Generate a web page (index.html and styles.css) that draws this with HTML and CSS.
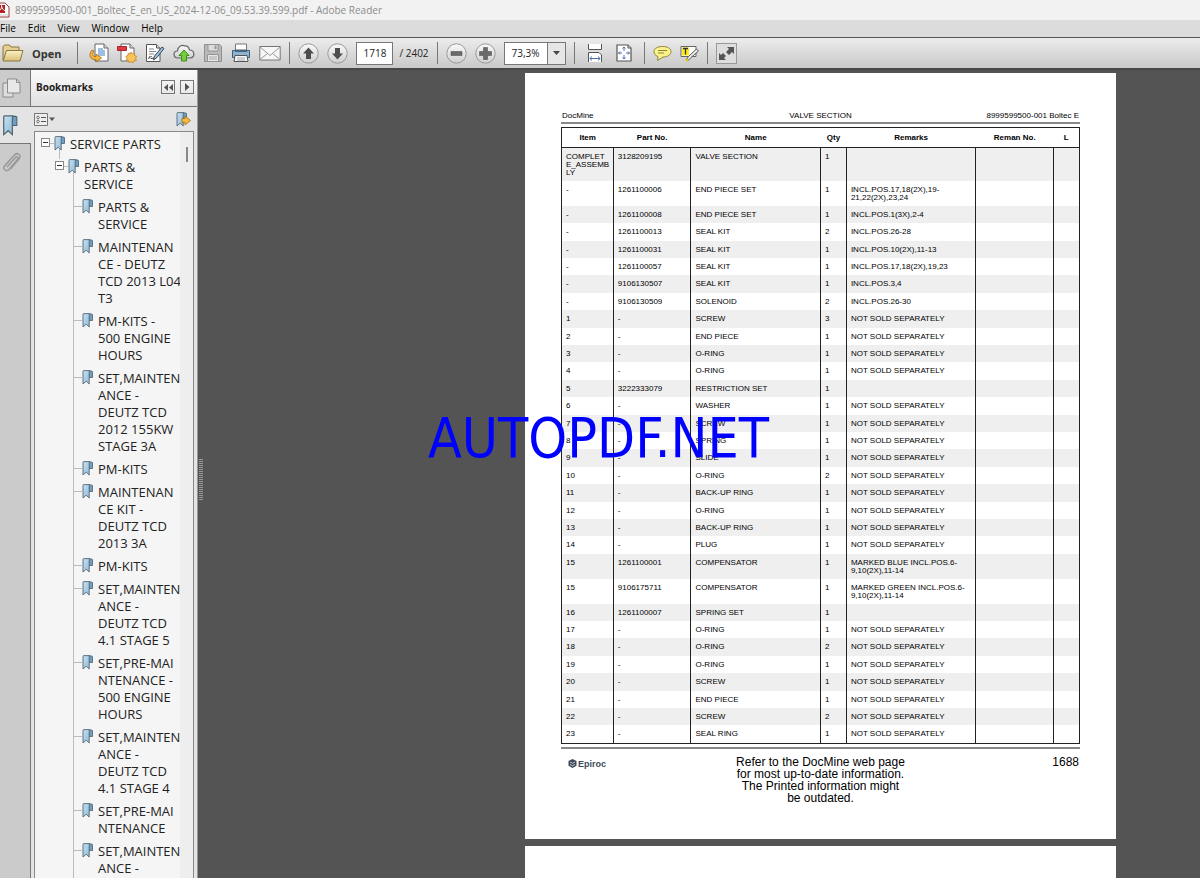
FILE: index.html
```html
<!DOCTYPE html>
<html lang="en">
<head>
<meta charset="utf-8">
<title>8999599500-001_Boltec_E_en_US_2024-12-06_09.53.39.599.pdf - Adobe Reader</title>
<link rel="stylesheet" href="styles.css">
</head>
<body>
<svg class="defs" width="0" height="0" aria-hidden="true">
  <defs>
    <linearGradient id="blue" x1="0" x2="1" y1="0" y2="1"><stop offset="0" stop-color="#c4e0f2"/><stop offset="1" stop-color="#8fbad6"/></linearGradient>
    <linearGradient id="tan" x1="0" x2="0" y1="0" y2="1"><stop offset="0" stop-color="#fbf0c4"/><stop offset="1" stop-color="#d9bf78"/></linearGradient>
    <linearGradient id="disc" x1="0" x2="0" y1="0" y2="1"><stop offset="0" stop-color="#fafafa"/><stop offset="1" stop-color="#cfcfcf"/></linearGradient>
    <symbol id="bm" viewBox="0 0 11 15"><path d="M6.500 1H9.500q1 0 1 1V7.500H7z" fill="#6f9fc0" stroke="#4a5f70" stroke-width=".8"/><path d="M1.500.6H8Q7.200 1 7.200 2.500V14L4.200 11.200 1 14V1.500Q1 .6 1.500.6z" fill="url(#blue)" stroke="#566775" stroke-width=".9"/></symbol>
  </defs>
</svg>
<div class="app">
  <header class="titlebar">
    <svg width="10" height="16" viewBox="0 0 10 16"><path d="M-4 1h9l4 4v10h-13z" fill="#fff" stroke="#9b3a3a"/><path d="M-4 3h9v8h-9z" fill="#b51f24"/><path d="M-2 9C1 8 2 6 1.500 3.500c.5 3 2 5 4 5.500" fill="none" stroke="#fff"/><path d="M-2 13h10" fill="none" stroke="#c9c9c9"/></svg>
    <span>8999599500-001_Boltec_E_en_US_2024-12-06_09.53.39.599.pdf - Adobe Reader</span>
  </header>
  <nav class="menubar">
    <button>File</button><button>Edit</button><button>View</button><button>Window</button><button>Help</button>
  </nav>
  <div class="toolbar">
    <button class="open"><svg width="22" height="20" viewBox="0 0 22 20"><path d="M1 17V3.500L2.500 2h5l1.500 2h8v4" fill="#e6cf92" stroke="#8a7643"/><path d="M1 18 4.500 7.500H21L18 18z" fill="url(#tan)" stroke="#8a7643"/></svg>Open</button>
    <span class="sep"></span>
    <div class="group files">
      <button aria-label="Convert"><svg width="20" height="20" viewBox="0 0 20 20"><path d="M6 1h9l4 4v13H6z" fill="#fff" stroke="#666"/><path d="M15 1v4h4" fill="#ddd" stroke="#666"/><path d="M9 6h5M9 8h7M9 10h7M9 12h7" stroke="#3c7cc4"/><path d="M3 7C-1 12 1 17 7 16.500V19l5.500-4L7 11v2.500C4 14 2.500 12 5 8z" fill="#f4b63c" stroke="#a36a10" stroke-width=".8"/></svg></button>
      <button aria-label="Create PDF"><svg width="20" height="20" viewBox="0 0 20 20"><path d="M4 1h9l4 4v13H4z" fill="#fff" stroke="#666"/><path d="M13 1v4h4" fill="#ddd" stroke="#666"/><path d="M.5 3.500h9v4h-9z" fill="#dc3a40" stroke="#a9262b"/><path d="m14 9 1.200 2 2.200-.8.200 2.300 2.200.8-1.300 1.900.9 2.200-2.300.3-.8 2.200-2-1.200-2 1.200-.8-2.200-2.200-.4.800-2.200-1.300-1.800 2.200-.9.200-2.200 2.200.8z" fill="#f8c45a" stroke="#c5842a" stroke-width=".8"/></svg></button>
      <button aria-label="Sign"><svg width="20" height="20" viewBox="0 0 20 20"><path d="M1.500 1.500h10L15 5v13.500H1.500z" fill="#fff" stroke="#555"/><path d="M11.500 1.500V5H15" fill="#ddd" stroke="#555"/><path d="M4 6h5M4 8.500h7M4 11h5M4 13.500h3" stroke="#888"/><path d="M17 4l2 1.500-7 9-3.500 2.500 1-4z" fill="#9cc0dc" stroke="#34495c"/><path d="m3 15.500 2-1 1 1 3-.5" fill="none" stroke="#333"/></svg></button>
      <button aria-label="Upload"><svg width="22" height="20" viewBox="0 0 22 20"><path d="M5 15C-.5 15 0 8 4.500 8 5 3 9 1.500 12 3c2-.5 4 1 4.500 4 5.500 0 6 8 .5 8z" fill="url(#disc)" stroke="#666" stroke-width="1.200"/><path d="m11 7 5 5.500h-2.500V18h-5v-5.500H6z" fill="#74cd3a" stroke="#3d8e17"/></svg></button>
      <button aria-label="Save"><svg width="20" height="20" viewBox="0 0 20 20"><path d="M1.500 1.500h15l2 2v15h-17z" fill="#b9b9b9" stroke="#8e8e8e"/><path d="M5 1.500h10V8H5z" fill="#ddd" stroke="#949494"/><path d="M11.500 2.500h2V6h-2z" fill="#999"/><path d="M4.500 11.500h11v7h-11z" fill="#e6e6e6" stroke="#949494"/><path d="M6 14h8M6 16h8" stroke="#aaa"/></svg></button>
      <button aria-label="Print"><svg width="20" height="20" viewBox="0 0 20 20"><path d="M4.500 1h11v7h-11z" fill="#fff" stroke="#777"/><path d="M1.500 7.500h17v7h-17z" fill="#8db4d2" stroke="#3e5c74"/><path d="M4 6.500h12v2.500H4z" fill="#4b6478"/><path d="M4 12.500h12l1 6H3z" fill="#f7f7f7" stroke="#555"/><path d="M6 15h8M6 17h8" stroke="#aaa"/></svg></button>
      <button aria-label="Email"><svg width="22" height="20" viewBox="0 0 22 20"><path d="M.8 3.500h20.400v13.500H.8z" fill="#f7f7f7" stroke="#777"/><path d="m1 4 10 8.500L21 4M1 16.500l7.500-6M21 16.500l-7.500-6" fill="none" stroke="#999"/></svg></button>
    </div>
    <span class="sep"></span>
    <div class="group">
      <button aria-label="Previous page"><svg width="21" height="21" viewBox="0 0 21 21"><circle cx="10.500" cy="10.500" r="9.700" fill="url(#disc)" stroke="#999"/><path d="m10.500 4.500 5.500 6h-3V16H8v-5.500H5z" fill="#4d4d4d"/></svg></button>
      <button aria-label="Next page"><svg width="21" height="21" viewBox="0 0 21 21"><circle cx="10.500" cy="10.500" r="9.700" fill="url(#disc)" stroke="#999"/><path d="m10.500 16.500 5.500-6h-3V5H8v5.500H5z" fill="#4d4d4d"/></svg></button>
      <label class="pager"><input class="page-no" aria-label="Page number" value="1718"><span>/ 2402</span></label>
    </div>
    <span class="sep"></span>
    <div class="group">
      <button aria-label="Zoom out"><svg width="21" height="21" viewBox="0 0 21 21"><circle cx="10.500" cy="10.500" r="9.700" fill="url(#disc)" stroke="#999"/><path d="M5 8.500h11v4H5z" fill="#6a6a6a" stroke="#555" stroke-width=".6"/></svg></button>
      <button aria-label="Zoom in"><svg width="21" height="21" viewBox="0 0 21 21"><circle cx="10.500" cy="10.500" r="9.700" fill="url(#disc)" stroke="#999"/><path d="M8.500 4.500h4v4h4v4h-4v4h-4v-4h-4v-4h4z" fill="#6a6a6a" stroke="#555" stroke-width=".6"/></svg></button>
      <div class="zoom"><input aria-label="Zoom level" value="73,3%"><button aria-label="Zoom options"><svg width="7" height="4" viewBox="0 0 7 4"><path d="M0 0h7L3.500 4z" fill="#444"/></svg></button></div>
    </div>
    <span class="sep"></span>
    <div class="group views">
      <button aria-label="Fit width"><svg width="16" height="20" viewBox="0 0 16 20"><path d="M1.500 1v5.500h13V1" fill="#fff" stroke="#555"/><path d="M1.500 19V9.500H12l2.500 2.500v7" fill="#fff" stroke="#555"/><path d="M3 15.500h10M5 13.500l-2.200 2L5 17.500M11 13.500l2.200 2-2.200 2" fill="none" stroke="#4a6fb5"/></svg></button>
      <button aria-label="Fit page"><svg width="16" height="18" viewBox="0 0 16 18"><path d="M1 1h11l3 3v13H1z" fill="#fff" stroke="#555" stroke-width="1.200"/><path d="M12 1v3h3" fill="#ddd" stroke="#555"/><path d="M8 3v4M8 11v4M2.500 9H6M10 9h3.500M6.500 4.500 8 3l1.500 1.500M6.500 13.500 8 15l1.500-1.500M4 7.500 2.500 9 4 10.500M12 7.500 13.500 9 12 10.500" fill="none" stroke="#4a6fb5"/></svg></button>
    </div>
    <span class="sep"></span>
    <div class="group">
      <button aria-label="Comment"><svg width="19" height="18" viewBox="0 0 19 18"><path d="M9.500 2.500c5 0 8.500 2 8.500 5s-3 5.500-8 5.500L4.500 16.500 5 12.500C2.500 11.500 1 10 1 7.500c0-3 3.500-5 8.500-5z" fill="#fbf38a" stroke="#8c8340"/><path d="M5 6.500h9M5 9h6" stroke="#8c8340"/></svg></button>
      <button aria-label="Highlight text"><svg width="19" height="18" viewBox="0 0 19 18"><path d="M1 2.500h15v10H1z" fill="#fff" stroke="#666"/><path d="M2 3.500h7v8H2z" fill="#ffec1a"/><path d="M3 4.500h5M5.500 4.500v6" stroke="#333" stroke-width="1.300"/><path d="m16.500 5 2 2-8 7-3 3-1-2 2-2.500z" fill="#ececec" stroke="#555"/><path d="M6 15l2 2" stroke="#d8c800" stroke-width="2"/></svg></button>
    </div>
    <span class="sep"></span>
    <button class="full" aria-label="Full screen"><svg width="19" height="19" viewBox="0 0 19 19"><path d="M10 3h7v7l-2-2-3 3-3-3 3-3zM9 16H2V9l2 2 2-2 3 3-2 2z" fill="#555"/></svg></button>
  </div>

  <div class="body">
    <nav class="rail" aria-label="Panels">
      <button class="tab" aria-label="Page thumbnails"><svg width="19" height="21" viewBox="0 0 19 21"><path d="M1 5h10v14H1z" fill="#ddd" stroke="#8b8b8b"/><path d="M5.500 1h9L18 4.500V15H5.500z" fill="#e8e8e8" stroke="#8b8b8b"/><path d="M14.500 1v3.500H18" fill="none" stroke="#8b8b8b"/></svg></button>
      <button class="tab active" aria-label="Bookmarks"><svg width="16" height="21" viewBox="0 0 11 15"><use href="#bm"/></svg></button>
      <button class="tab clip" aria-label="Attachments"><svg width="20" height="21" viewBox="0 0 20 21"><path d="m6 15 8.500-9.500c1.500-1.500 3.500.2 2.200 1.800L8 17.500c-2.500 2.500-7 0-4.500-3.500L13 3.500C16-.5 21 3 18 7l-8.500 10" fill="none" stroke="#999" stroke-width="1.500"/></svg></button>
    </nav>
    <aside class="panel">
      <div class="panel-head"><h2>Bookmarks</h2>
        <button aria-label="Collapse panel"><svg width="9" height="7" viewBox="0 0 9 7"><path d="M4 0v7L0 3.500zM9 0v7L5 3.500z" fill="#555"/></svg></button>
        <button aria-label="Expand panel"><svg width="5" height="8" viewBox="0 0 5 8"><path d="M0 0v8l4.500-4z" fill="#555"/></svg></button>
      </div>
      <div class="panel-tools">
        <button aria-label="Options"><svg width="21" height="13" viewBox="0 0 21 13"><path d="M.5.5h13v12H.5z" fill="#eee" stroke="#777"/><path d="M7 4.500h5M7 8.500h5" stroke="#555"/><circle cx="4" cy="4.500" r="1.300" fill="none" stroke="#555" stroke-width=".8"/><circle cx="4" cy="8.500" r="1.300" fill="none" stroke="#555" stroke-width=".8"/><path d="M15 4.500h6l-3 3.500z" fill="#555"/></svg></button>
        <button aria-label="Find bookmark"><svg width="15" height="15" viewBox="0 0 15 15"><use href="#bm" width="11" height="15"/><path d="M6 6.500h3V4l5.500 4.500L9 13v-2.500H6z" fill="#f5b840" stroke="#a36a10" stroke-width=".8"/></svg></button>
      </div>
      <div class="tree-box">
        <ul class="tree">
          <li><div class="node root"><button class="toggle" aria-label="Collapse"></button><i class="dash"></i><svg class="bm"><use href="#bm"/></svg><a href="#">SERVICE PARTS</a></div>
            <ul class="second">
              <li><div class="node root"><button class="toggle" aria-label="Collapse"></button><i class="dash"></i><svg class="bm"><use href="#bm"/></svg><a href="#">PARTS &amp;<br>SERVICE</a></div>
                <ul class="third">
                  <li class="node"><i class="dash"></i><svg class="bm"><use href="#bm"/></svg><a href="#">PARTS &amp;<br>SERVICE</a></li>
                  <li class="node"><i class="dash"></i><svg class="bm"><use href="#bm"/></svg><a href="#">MAINTENAN<br>CE - DEUTZ<br>TCD 2013 L04<br>T3</a></li>
                  <li class="node"><i class="dash"></i><svg class="bm"><use href="#bm"/></svg><a href="#">PM-KITS -<br>500 ENGINE<br>HOURS</a></li>
                  <li class="node"><i class="dash"></i><svg class="bm"><use href="#bm"/></svg><a href="#">SET,MAINTEN<br>ANCE -<br>DEUTZ TCD<br>2012 155KW<br>STAGE 3A</a></li>
                  <li class="node"><i class="dash"></i><svg class="bm"><use href="#bm"/></svg><a href="#">PM-KITS</a></li>
                  <li class="node"><i class="dash"></i><svg class="bm"><use href="#bm"/></svg><a href="#">MAINTENAN<br>CE KIT -<br>DEUTZ TCD<br>2013 3A</a></li>
                  <li class="node"><i class="dash"></i><svg class="bm"><use href="#bm"/></svg><a href="#">PM-KITS</a></li>
                  <li class="node"><i class="dash"></i><svg class="bm"><use href="#bm"/></svg><a href="#">SET,MAINTEN<br>ANCE -<br>DEUTZ TCD<br>4.1 STAGE 5</a></li>
                  <li class="node"><i class="dash"></i><svg class="bm"><use href="#bm"/></svg><a href="#">SET,PRE-MAI<br>NTENANCE -<br>500 ENGINE<br>HOURS</a></li>
                  <li class="node"><i class="dash"></i><svg class="bm"><use href="#bm"/></svg><a href="#">SET,MAINTEN<br>ANCE -<br>DEUTZ TCD<br>4.1 STAGE 4</a></li>
                  <li class="node"><i class="dash"></i><svg class="bm"><use href="#bm"/></svg><a href="#">SET,PRE-MAI<br>NTENANCE</a></li>
                  <li class="node"><i class="dash"></i><svg class="bm"><use href="#bm"/></svg><a href="#">SET,MAINTEN<br>ANCE -</a></li>
                </ul>
              </li>
            </ul>
          </li>
        </ul>
        <div class="scroll"><span class="thumb"></span></div>
      </div>
    </aside>
    <div class="splitter"><span class="grip"></span></div>
    <main class="viewer">
      <article class="page">
        <div class="page-head"><span>DocMine</span><span class="mid">VALVE SECTION</span><span class="end">8999599500-001 Boltec E</span></div>
        <table class="parts">
          <colgroup><col class="c-item"><col class="c-part"><col class="c-name"><col class="c-qty"><col class="c-rem"><col class="c-part"><col class="c-qty"></colgroup>
          <thead><tr><th>Item</th><th>Part No.</th><th>Name</th><th>Qty</th><th>Remarks</th><th>Reman No.</th><th>L</th></tr></thead>
          <tbody>
            <tr><td>COMPLET<br>E_ASSEMB<br>LY</td><td>3128209195</td><td>VALVE SECTION</td><td>1</td><td></td><td></td><td></td></tr>
            <tr><td>-</td><td>1261100006</td><td>END PIECE SET</td><td>1</td><td>INCL.POS.17,18(2X),19-<br>21,22(2X),23,24</td><td></td><td></td></tr>
            <tr><td>-</td><td>1261100008</td><td>END PIECE SET</td><td>1</td><td>INCL.POS.1(3X),2-4</td><td></td><td></td></tr>
            <tr><td>-</td><td>1261100013</td><td>SEAL KIT</td><td>2</td><td>INCL.POS.26-28</td><td></td><td></td></tr>
            <tr><td>-</td><td>1261100031</td><td>SEAL KIT</td><td>1</td><td>INCL.POS.10(2X),11-13</td><td></td><td></td></tr>
            <tr><td>-</td><td>1261100057</td><td>SEAL KIT</td><td>1</td><td>INCL.POS.17,18(2X),19,23</td><td></td><td></td></tr>
            <tr><td>-</td><td>9106130507</td><td>SEAL KIT</td><td>1</td><td>INCL.POS.3,4</td><td></td><td></td></tr>
            <tr><td>-</td><td>9106130509</td><td>SOLENOID</td><td>2</td><td>INCL.POS.26-30</td><td></td><td></td></tr>
            <tr><td>1</td><td>-</td><td>SCREW</td><td>3</td><td>NOT SOLD SEPARATELY</td><td></td><td></td></tr>
            <tr><td>2</td><td>-</td><td>END PIECE</td><td>1</td><td>NOT SOLD SEPARATELY</td><td></td><td></td></tr>
            <tr><td>3</td><td>-</td><td>O-RING</td><td>1</td><td>NOT SOLD SEPARATELY</td><td></td><td></td></tr>
            <tr><td>4</td><td>-</td><td>O-RING</td><td>1</td><td>NOT SOLD SEPARATELY</td><td></td><td></td></tr>
            <tr><td>5</td><td>3222333079</td><td>RESTRICTION SET</td><td>1</td><td></td><td></td><td></td></tr>
            <tr><td>6</td><td>-</td><td>WASHER</td><td>1</td><td>NOT SOLD SEPARATELY</td><td></td><td></td></tr>
            <tr><td>7</td><td>-</td><td>SCREW</td><td>1</td><td>NOT SOLD SEPARATELY</td><td></td><td></td></tr>
            <tr><td>8</td><td>-</td><td>SPRING</td><td>1</td><td>NOT SOLD SEPARATELY</td><td></td><td></td></tr>
            <tr><td>9</td><td>-</td><td>SLIDE</td><td>1</td><td>NOT SOLD SEPARATELY</td><td></td><td></td></tr>
            <tr><td>10</td><td>-</td><td>O-RING</td><td>2</td><td>NOT SOLD SEPARATELY</td><td></td><td></td></tr>
            <tr><td>11</td><td>-</td><td>BACK-UP RING</td><td>1</td><td>NOT SOLD SEPARATELY</td><td></td><td></td></tr>
            <tr><td>12</td><td>-</td><td>O-RING</td><td>1</td><td>NOT SOLD SEPARATELY</td><td></td><td></td></tr>
            <tr><td>13</td><td>-</td><td>BACK-UP RING</td><td>1</td><td>NOT SOLD SEPARATELY</td><td></td><td></td></tr>
            <tr><td>14</td><td>-</td><td>PLUG</td><td>1</td><td>NOT SOLD SEPARATELY</td><td></td><td></td></tr>
            <tr><td>15</td><td>1261100001</td><td>COMPENSATOR</td><td>1</td><td>MARKED BLUE INCL.POS.6-<br>9,10(2X),11-14</td><td></td><td></td></tr>
            <tr><td>15</td><td>9106175711</td><td>COMPENSATOR</td><td>1</td><td>MARKED GREEN INCL.POS.6-<br>9,10(2X),11-14</td><td></td><td></td></tr>
            <tr><td>16</td><td>1261100007</td><td>SPRING SET</td><td>1</td><td></td><td></td><td></td></tr>
            <tr><td>17</td><td>-</td><td>O-RING</td><td>1</td><td>NOT SOLD SEPARATELY</td><td></td><td></td></tr>
            <tr><td>18</td><td>-</td><td>O-RING</td><td>2</td><td>NOT SOLD SEPARATELY</td><td></td><td></td></tr>
            <tr><td>19</td><td>-</td><td>O-RING</td><td>1</td><td>NOT SOLD SEPARATELY</td><td></td><td></td></tr>
            <tr><td>20</td><td>-</td><td>SCREW</td><td>1</td><td>NOT SOLD SEPARATELY</td><td></td><td></td></tr>
            <tr><td>21</td><td>-</td><td>END PIECE</td><td>1</td><td>NOT SOLD SEPARATELY</td><td></td><td></td></tr>
            <tr><td>22</td><td>-</td><td>SCREW</td><td>2</td><td>NOT SOLD SEPARATELY</td><td></td><td></td></tr>
            <tr><td>23</td><td>-</td><td>SEAL RING</td><td>1</td><td>NOT SOLD SEPARATELY</td><td></td><td></td></tr>
          </tbody>
        </table>
        <footer class="page-foot">
          <span class="logo"><svg width="9" height="9" viewBox="0 0 9 9"><path d="M4.500 0 8.500 2v4.800L4.500 9 .5 6.800V2z" fill="#3d4a5a"/><path d="m2 3 2.500 1.300L7 3M2 5.500l2.500 1.300L7 5.500" fill="none" stroke="#dfe4ea" stroke-width=".8"/></svg>Epiroc</span>
          <p>Refer to the DocMine web page<br>for most up-to-date information.<br>The Printed information might<br>be outdated.</p>
          <span class="folio">1688</span>
        </footer>
      </article>
      <article class="page next"></article>
    </main>
    <div class="watermark">AUTOPDF.NET</div>
  </div>
</div>
</body>
</html>
```
FILE: styles.css
```css
* { box-sizing: border-box; }
body { margin: 0; font-family: "Open Sans", "Noto Sans", sans-serif; font-size: 10px; color: #222; }
button { margin: 0; padding: 0; border: 0; background: none; font: inherit; color: inherit; display: inline-flex; align-items: center; justify-content: center; }
svg { display: block; flex: none; }
ul { margin: 0; padding: 0; list-style: none; }
.defs { position: absolute; }
.app { height: 100vh; display: flex; flex-direction: column; overflow: hidden; }

.titlebar { flex: none; height: 20px; display: flex; align-items: center; gap: 5px; background: #f2f2f2; color: #8c8c8c; white-space: nowrap; }
.menubar { flex: none; height: 17px; display: flex; gap: 12px; background: #dcdcdc; line-height: 17px; color: #000; }
.toolbar { flex: none; height: 33px; display: flex; align-items: center; background: linear-gradient(#ececec, #c9c9c9); border-top: 1px solid #555; border-bottom: 2px solid #484848; }
.open { gap: 8px; padding-left: 2px; font-weight: 700; font-size: 11px; color: #333; }
.sep { width: 1px; height: 22px; margin: 0 8px; background: #777; }
.open + .sep { margin: 0 11px 0 16px; }
.group { display: flex; align-items: center; gap: 8px; }
.pager { display: flex; align-items: center; gap: 6px; }
.page-no, .zoom { height: 23px; border: 1px solid #777; background: #fff; }
.page-no { width: 37px; padding: 0; text-align: center; font: inherit; color: #222; }
.zoom { display: flex; width: 62px; }
.zoom input { width: 42px; border: 0; padding: 0; text-align: center; font: inherit; color: #222; background: none; }
.zoom button { flex: 1; background: #e6e6e6; border-left: 1px solid #777; }
.views { gap: 13px; padding: 0 4px; }
.full { width: 21px; height: 21px; border: 1px solid #999; background: #dedede; }

.body { flex: 1; min-height: 0; display: flex; position: relative; }
.rail { flex: none; width: 31px; display: flex; flex-direction: column; background: #cbcbcb; border-right: 1px solid #777; }
.tab { height: 37px; justify-content: flex-start; padding-left: 2px; border-bottom: 1px solid #777; }
.tab.active { background: #e4e4e4; margin-right: -1px; }
.tab.clip { border-bottom: 0; padding-left: 1px; }
.panel { flex: none; width: 167px; display: flex; flex-direction: column; background: #e4e4e4; border-right: 1px solid #999; }
.panel-head { flex: none; height: 37px; display: flex; align-items: center; gap: 5px; padding: 0 3px 2px 5px; background: linear-gradient(#fafafa, #e0e0e0); border-bottom: 1px solid #777; }
.panel-head h2 { flex: 1; margin: 0; font-size: 10px; font-weight: 700; color: #222; }
.panel-head button { width: 14px; height: 14px; border: 1px solid #777; }
.panel-tools { flex: none; height: 24px; display: flex; align-items: center; justify-content: space-between; padding: 0 6px 0 3px; }
.tree-box { flex: 1; min-height: 0; display: flex; margin: 0 3px; border: 1px solid #888; border-bottom: 0; background: #f5f5f5; overflow: hidden; }
.tree { flex: 1; min-width: 0; padding: 4px 0 0 6px; }
.node { display: flex; align-items: flex-start; padding-bottom: 6px; }
.node > * { flex: none; }
.node.root { background: linear-gradient(#bbb, #bbb) 18px 8px / 1px 100% no-repeat; }
.node a { margin-left: 5px; color: #222; text-decoration: none; font-size: 13px; line-height: 17px; white-space: nowrap; }
.bm { width: 11px; height: 15px; }
.toggle { width: 9px; height: 9px; margin-top: 2px; border: 1px solid #888; background: #fff; }
.toggle::before { content: ""; width: 5px; height: 1px; background: #333; }
.dash { width: 4px; height: 1px; margin-top: 7px; background: #bbb; }
.second { padding-left: 14px; }
.third { margin-left: 18px; border-left: 1px solid #bbb; }
.third .dash { width: 8px; }
.scroll { flex: none; width: 13px; display: flex; justify-content: center; padding-top: 15px; background: #eee; }
.thumb { width: 2px; height: 15px; background: #888; }
.splitter { flex: none; width: 5px; display: flex; align-items: center; padding: 12px 0 0 1px; background: #545454; }
.grip { width: 4px; height: 42px; background: repeating-linear-gradient(#999 0 1px, #545454 1px 2px); }

.viewer { flex: 1; min-width: 0; display: flex; flex-direction: column; align-items: flex-end; gap: 7px; padding: 3px 84px 0 0; background: #545454; overflow: hidden; }
.page { flex: none; width: 591px; padding: 38px 36px 35px; background: #fff; font-family: "Liberation Sans", Arial, sans-serif; font-size: 8px; line-height: 8px; color: #000; }
.page.next { height: 60px; padding: 0; }
.page-head { display: grid; grid-template-columns: 1fr auto 1fr; padding: 1px 1px 2px; border-bottom: 2px solid #888; }
.page-head .end { text-align: right; }
.parts { width: 100%; margin-top: 3px; table-layout: fixed; border-collapse: collapse; border: 1px solid #222; }
.c-item { width: 10%; }
.c-part { width: 15%; }
.c-name { width: 25%; }
.c-qty { width: 5%; }
.c-rem { width: 25%; }
.parts th { height: 20px; padding: 0; border-bottom: 1px solid #222; font-weight: 700; text-align: center; }
.parts td { height: 17px; padding: 5px 0 4px 4px; border-left: 1px solid #222; vertical-align: top; white-space: nowrap; }
.parts tbody tr:nth-child(odd) { background: #efefef; }
.parts tr:nth-child(5n + 2) td, .parts tr:nth-child(5n + 4) td { height: 18px; }
.page-foot { display: grid; grid-template-columns: 1fr auto 1fr; margin-top: 3px; padding: 7px 1px 0; border-top: 2px solid #888; font-size: 12px; line-height: 12px; }
.page-foot p { margin: 0; text-align: center; }
.folio { text-align: right; }
.logo { display: flex; align-items: center; gap: 1px; align-self: start; padding: 2px 0 0 6px; font-size: 9px; font-weight: 700; color: #3d4a5a; }

.watermark { position: absolute; left: 428px; top: 332px; font-family: "DejaVu Sans Condensed", "DejaVu Sans", sans-serif; font-size: 55px; line-height: 72px; color: #00f; white-space: nowrap; }
```
